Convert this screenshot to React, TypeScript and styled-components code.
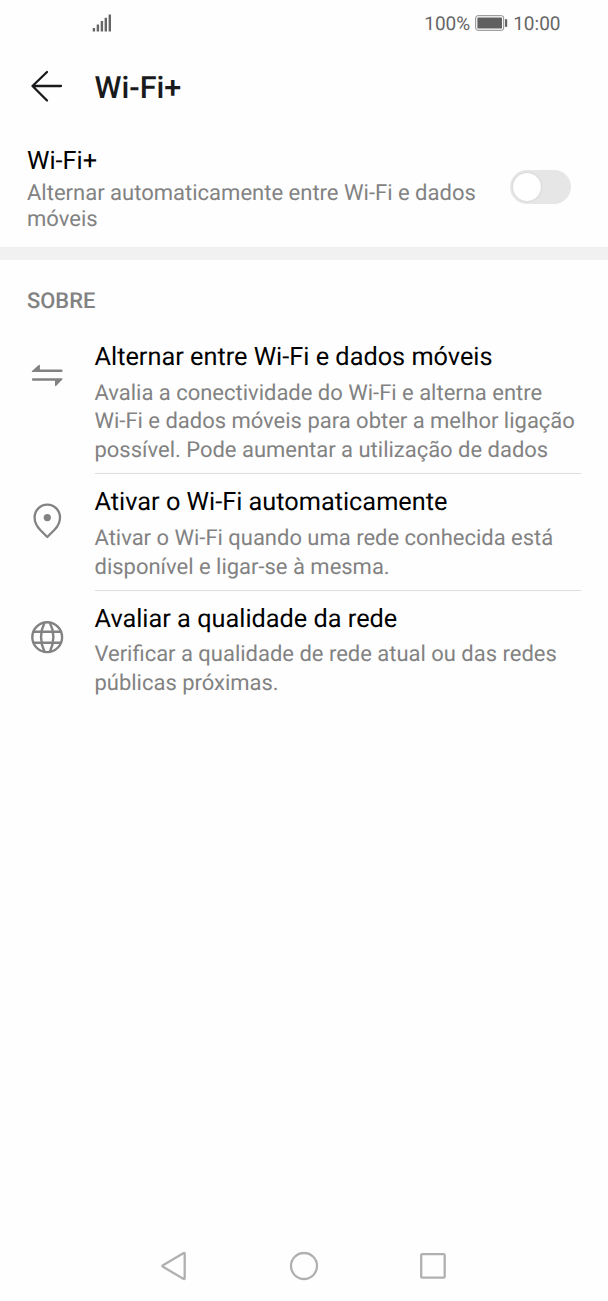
import React from "react";
import styled, { createGlobalStyle } from "styled-components";

const GlobalStyle = createGlobalStyle`
  * { box-sizing: border-box; }
  body {
    margin: 0;
    background: #fefefe;
    font-family: Roboto, sans-serif;
    text-rendering: geometricPrecision;
  }
  h1, h2, h3, p { margin: 0; }
`;

const Screen = styled.div`
  width: 608px;
  height: 1301px;
  display: flex;
  flex-direction: column;
  background: #fefefe;
  overflow: hidden;
`;

const StatusBar = styled.div`
  height: 46px;
  flex: none;
  display: flex;
  align-items: center;
  padding: 0 47.5px 0 92px;
  color: #666;
  font-size: 19px;
  line-height: 24px;
`;

const StatusRight = styled.div`
  margin-left: auto;
  display: flex;
  align-items: center;
  gap: 5px;
`;

const StatusText = styled.span`
  padding-top: 1px;
`;

const Header = styled.header`
  height: 82px;
  flex: none;
  display: flex;
  align-items: center;
  padding-left: 30px;
  gap: 30.5px;
`;

const Title = styled.h1`
  padding-top: 4px;
  font-size: 30.6px;
  line-height: 34px;
  font-weight: 500;
  color: #191a1c;
`;

const SettingRow = styled.section`
  height: 119px;
  flex: none;
  display: flex;
  align-items: flex-start;
  justify-content: space-between;
  padding: 19px 36.8px 0 27px;
`;

const SettingText = styled.div`
  width: 460px;
`;

const ItemTitle = styled.h3`
  font-size: 25.3px;
  line-height: 30px;
  font-weight: 400;
  color: #000;
  white-space: nowrap;
`;

const Summary = styled.p`
  margin-top: 4px;
  font-size: 22.02px;
  line-height: 26px;
  color: #828282;
`;

const Switch = styled.button`
  width: 61.6px;
  height: 34px;
  margin-top: 23px;
  padding: 3px;
  border: 0;
  border-radius: 17px;
  background: #e6e6e6;
  display: flex;
`;

const Knob = styled.span`
  width: 28px;
  height: 28px;
  border-radius: 50%;
  background: #fff;
  box-shadow: 0 0 2px rgba(0, 0, 0, 0.18);
`;

const Separator = styled.div`
  height: 13.4px;
  flex: none;
  background: #f1f1f1;
`;

const SectionTitle = styled.h2`
  padding: 28.8px 27px 0;
  height: 71.4px;
  flex: none;
  font-size: 21.9px;
  line-height: 26px;
  font-weight: 500;
  color: #828282;
`;

const List = styled.div`
  flex: 1;
  padding: 0 27px;
`;

const Item = styled.div`
  display: flex;
`;

const IconBox = styled.div`
  width: 67.5px;
  padding: 25px 0 0 2px;
  flex: none;
  color: #828282;
  svg { display: block; }
`;

const ItemBody = styled.div<{ $last?: boolean }>`
  flex: 1;
  padding: 11px 0 7.5px;
  margin-bottom: 2.6px;
  border-bottom: 1px solid ${(p) => (p.$last ? "transparent" : "#dedede")};
`;

const Description = styled.p`
  margin-top: 6.8px;
  font-size: 21.98px;
  line-height: 28.8px;
  color: #828282;
  white-space: nowrap;
`;

const NavBar = styled.nav`
  height: 70px;
  flex: none;
  display: flex;
  justify-content: center;
  align-items: center;
  gap: 95px;
  svg { display: block; }
`;

const SignalIcon = () => (
  <svg width="20" height="18" viewBox="0 0 20 18" fill="#666">
    <rect x="0.7" y="14" width="2.4" height="3.5" />
    <rect x="4.7" y="10.5" width="2.4" height="7" />
    <rect x="8.7" y="7" width="2.4" height="10.5" />
    <rect x="12.6" y="3.8" width="2.4" height="13.7" />
    <rect x="16.6" y="0.5" width="2.4" height="17" />
  </svg>
);

const BatteryIcon = () => (
  <svg width="33" height="16" viewBox="0 0 33 16">
    <rect x="0.7" y="0.7" width="28" height="14.6" rx="2.2" fill="none" stroke="#888" strokeWidth="1" />
    <rect x="2.4" y="2.4" width="24.6" height="11.2" rx="0.6" fill="#606060" />
    <rect x="30" y="4" width="2.2" height="8" rx="0.8" fill="#666" />
  </svg>
);

const BackIcon = () => (
  <svg width="34" height="34" viewBox="0 0 34 34" fill="none" stroke="#191a1c" strokeWidth="2.3" strokeLinecap="round" strokeLinejoin="round">
    <path d="M31 16H2.5M17 2L2.5 16L17 30.5" />
  </svg>
);

const SwapIcon = () => (
  <svg width="36" height="36" viewBox="0 0 36 36" fill="#828282">
    <path d="M3.5 15.1C2.7 15.1 2.5 14.4 3 13.9L9.7 8C10.3 7.4 10.9 7.7 10.9 8.5V12.6H32.5Q33.6 12.6 33.6 13.85T32.5 15.1Z" />
    <path d="M4 21.3H32.7C33.6 21.3 33.8 22.1 33.3 22.6L27.3 28.8C26.7 29.4 26 29.2 26 28.4V23.8H4Q2.9 23.8 2.9 22.55T4 21.3Z" />
  </svg>
);

const PinIcon = () => (
  <svg width="36" height="38" viewBox="0 0 36 38" fill="none" stroke="#828282" strokeWidth="2.3" strokeLinejoin="round">
    <path d="M18.3 35L11.3 28C7.5 24 5.6 19.8 5.6 15.4a12.7 12.8 0 0 1 25.4 0C31 19.8 29.1 24 25.3 28Z" />
    <circle cx="18.3" cy="15.6" r="3.6" fill="#828282" stroke="none" />
  </svg>
);

const GlobeIcon = () => (
  <svg width="36" height="36" viewBox="0 0 36 36" fill="none" stroke="#828282" strokeWidth="2.4">
    <circle cx="18.2" cy="18.2" r="14.9" />
    <path d="M4.4 12.7H32M4.4 23.7H32" />
    <path d="M15.6 3.5C11 12.8 11 23.4 15.6 32.9M20.8 3.5C25.4 12.8 25.4 23.4 20.8 32.9" />
  </svg>
);

const items = [
  {
    icon: <SwapIcon />,
    title: "Alternar entre Wi-Fi e dados móveis",
    lines: [
      "Avalia a conectividade do Wi-Fi e alterna entre",
      "Wi-Fi e dados móveis para obter a melhor ligação",
      "possível. Pode aumentar a utilização de dados",
    ],
  },
  {
    icon: <PinIcon />,
    title: "Ativar o Wi-Fi automaticamente",
    lines: ["Ativar o Wi-Fi quando uma rede conhecida está", "disponível e ligar-se à mesma."],
  },
  {
    icon: <GlobeIcon />,
    title: "Avaliar a qualidade da rede",
    lines: ["Verificar a qualidade de rede atual ou das redes", "públicas próximas."],
  },
];

export default function App() {
  return (
    <>
      <GlobalStyle />
      <Screen>
        <StatusBar>
          <SignalIcon />
          <StatusRight>
            <StatusText>100%</StatusText>
            <BatteryIcon />
            <StatusText>10:00</StatusText>
          </StatusRight>
        </StatusBar>
        <Header>
          <BackIcon />
          <Title>Wi-Fi+</Title>
        </Header>
        <SettingRow>
          <SettingText>
            <ItemTitle>Wi-Fi+</ItemTitle>
            <Summary>Alternar automaticamente entre Wi-Fi e dados móveis</Summary>
          </SettingText>
          <Switch role="switch" aria-checked="false" aria-label="Wi-Fi+">
            <Knob />
          </Switch>
        </SettingRow>
        <Separator />
        <SectionTitle>SOBRE</SectionTitle>
        <List>
          {items.map((item, i) => (
            <Item key={item.title}>
              <IconBox>{item.icon}</IconBox>
              <ItemBody $last={i === items.length - 1}>
                <ItemTitle>{item.title}</ItemTitle>
                <Description>
                  {item.lines.map((line, n) => (
                    <React.Fragment key={line}>
                      {n > 0 && <br />}
                      {line}
                    </React.Fragment>
                  ))}
                </Description>
              </ItemBody>
            </Item>
          ))}
        </List>
        <NavBar>
          <svg width="34" height="34" viewBox="0 0 34 34" fill="none" stroke="#b0b0b0" strokeWidth="2.3" strokeLinejoin="round">
            <path d="M5 16.2L25.3 4.2Q26.7 3.6 26.7 5V29Q26.7 30.4 25.3 29.8L5 17.8Q3.8 17 5 16.2Z" />
          </svg>
          <svg width="34" height="34" viewBox="0 0 34 34" fill="none" stroke="#b0b0b0" strokeWidth="2.3">
            <circle cx="17" cy="17" r="13" />
          </svg>
          <svg width="34" height="34" viewBox="0 0 34 34" fill="none" stroke="#b0b0b0" strokeWidth="2.3">
            <rect x="5.2" y="5.2" width="23.5" height="23.5" rx="1" />
          </svg>
        </NavBar>
      </Screen>
    </>
  );
}
